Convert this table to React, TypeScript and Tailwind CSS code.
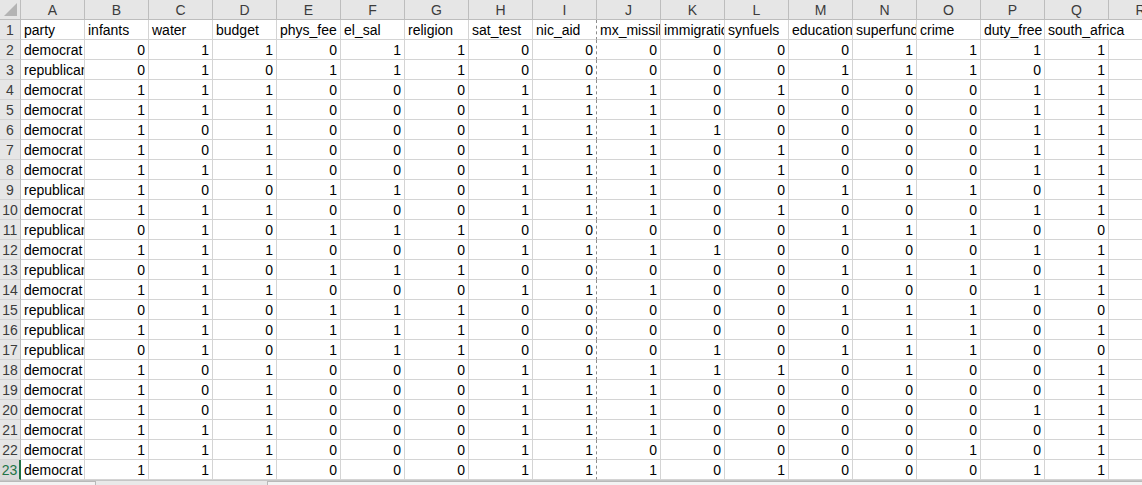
import clsx from "clsx";

const headers = [
  "party",
  "infants",
  "water",
  "budget",
  "phys_fee",
  "el_sal",
  "religion",
  "sat_test",
  "nic_aid",
  "mx_missile",
  "immigration",
  "synfuels",
  "education",
  "superfund_right_to_sue",
  "crime",
  "duty_free",
  "south_africa",
];

const letters = ["A", "B", "C", "D", "E", "F", "G", "H", "I", "J", "K", "L", "M", "N", "O", "P", "Q", "R"];

// party, then 16 votes
const rows: [string, string][] = [
  ["democrat", "0110110000001111"],
  ["republican", "0101110000011101"],
  ["democrat", "1110001110100011"],
  ["democrat", "1110001110000011"],
  ["democrat", "1010001111000011"],
  ["democrat", "1010001110100011"],
  ["democrat", "1110001110100011"],
  ["republican", "1001101110011101"],
  ["democrat", "1110001110100011"],
  ["republican", "0101110000011100"],
  ["democrat", "1110001111000011"],
  ["republican", "0101110000011101"],
  ["democrat", "1110001110000011"],
  ["republican", "0101110000011100"],
  ["republican", "1101110000001101"],
  ["republican", "0101110001011100"],
  ["democrat", "1010001111101001"],
  ["democrat", "1010001110000001"],
  ["democrat", "1010001110000011"],
  ["democrat", "1110001110000001"],
  ["democrat", "1110001100000101"],
  ["democrat", "1110001110100011"],
];

const cell =
  "box-border h-[20px] w-[64px] shrink-0 border-b border-r border-[#d4d4d4] px-[3px] leading-[20px] whitespace-nowrap overflow-hidden";

function RowHead({ n, active }: { n: number; active?: boolean }) {
  return (
    <div
      className={clsx(
        "box-border h-[20px] w-[21px] shrink-0 border-b border-[#d4d4d4] text-center text-[14px] leading-[20px]",
        active
          ? "border-r-2 border-r-[#217346] bg-[#d9d9d9] text-[#217346]"
          : "border-r border-r-[#bdbdbd] bg-[#e6e6e6] text-[#3c3c3c]"
      )}
    >
      {n}
    </div>
  );
}

export default function App() {
  return (
    <div
      className="flex h-[485px] w-[1142px] flex-col overflow-hidden bg-white text-[14px] text-black"
      style={{ fontFamily: '"Liberation Sans", Arial, sans-serif' }}
    >
      {/* column letters */}
      <div className="flex h-[20px] shrink-0">
        <div className="box-border flex h-[20px] w-[21px] shrink-0 items-end justify-end border-b border-r border-[#bdbdbd] bg-[#e6e6e6] p-[3px]">
          <svg width="13" height="13" viewBox="0 0 13 13">
            <polygon points="13,0 13,13 0,13" fill="#b4b4b4" />
          </svg>
        </div>
        {letters.map((l) => (
          <div
            key={l}
            className="box-border h-[20px] w-[64px] shrink-0 border-b border-r border-[#bdbdbd] bg-[#e6e6e6] text-center leading-[20px] text-[#3c3c3c]"
          >
            {l}
          </div>
        ))}
      </div>

      {/* row 1: field names */}
      <div className="flex h-[20px] shrink-0">
        <RowHead n={1} />
        {headers.map((h, i) => (
          <div
            key={h}
            className={clsx(
              cell,
              i === 8 && "border-r-[#8c8c8c] [border-right-style:dashed]",
              i === 16 && "overflow-visible border-r-transparent"
            )}
          >
            {h}
          </div>
        ))}
        <div className={cell}></div>
      </div>

      {rows.map(([party, votes], r) => (
        <div key={r} className="flex h-[20px] shrink-0">
          <RowHead n={r + 2} active={r === rows.length - 1} />
          <div className={cell}>{party}</div>
          {votes.split("").map((v, i) => (
            <div
              key={i}
              className={clsx(
                cell,
                "text-right",
                i === 7 && "border-r-[#8c8c8c] [border-right-style:dashed]"
              )}
            >
              {v}
            </div>
          ))}
          <div className={cell}></div>
        </div>
      ))}

      {/* sheet tabs / scrollbar strip */}
      <div className="flex h-[5px] shrink-0 items-end border-t border-[#c6c6c6] bg-[#e9e9e9]">
        <div className="box-border h-[4px] w-[96px] border-l-0 border-r border-t border-[#b9b9b9] bg-[#f3f3f3]"></div>
        <div className="w-[171px]"></div>
        <div className="box-border h-[4px] flex-1 border-l border-t border-[#b9b9b9] bg-[#f3f3f3]"></div>
      </div>
    </div>
  );
}
